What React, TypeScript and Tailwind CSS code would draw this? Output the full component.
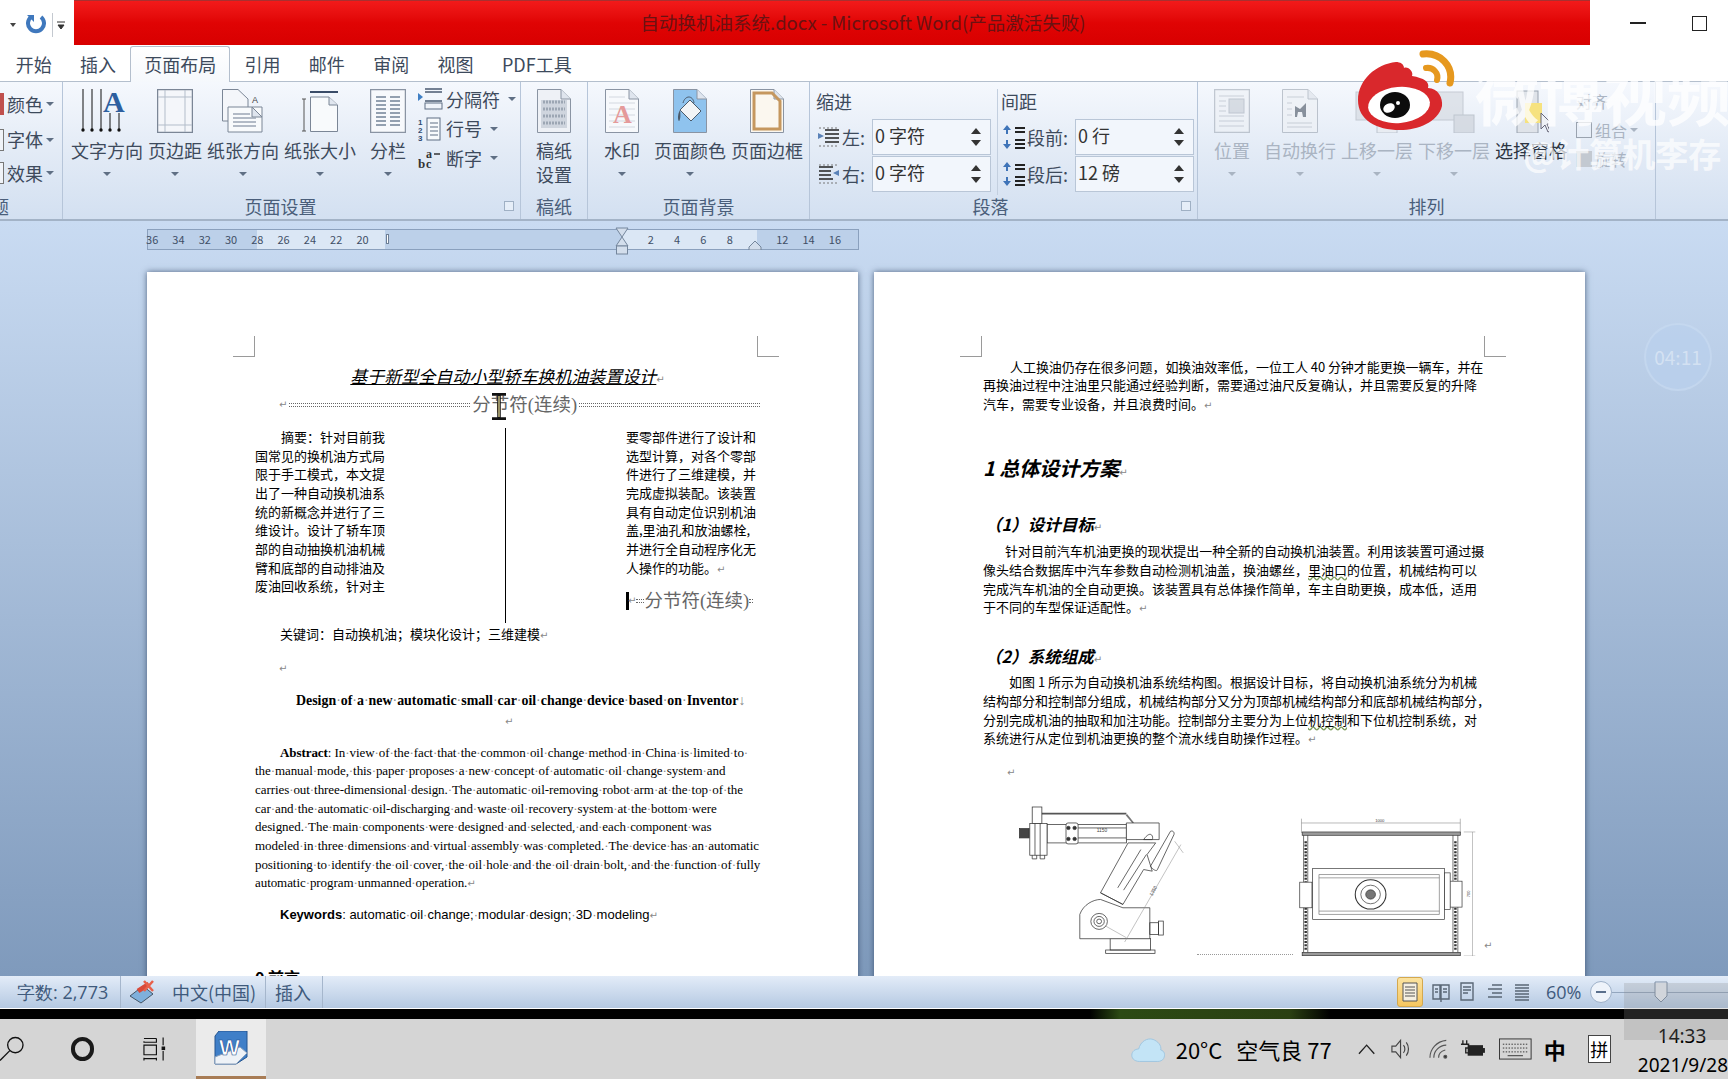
import type { ReactNode } from "react";

const CJK = "font-['Noto_Sans_CJK_SC','Liberation_Sans',sans-serif]";
const SERIF = "font-['Liberation_Serif','Noto_Sans_CJK_SC',serif]";

const Arrow = ({ light }: { light?: boolean }) => (
  <span className={`block h-0 w-0 border-x-[4px] border-t-[4px] border-x-transparent ${light ? "border-t-[#a9b4c2]" : "border-t-[#5f6f84]"}`} />
);

const Launcher = () => (
  <span className="absolute bottom-[8px] right-[6px] block h-[10px] w-[10px] border border-[#9fb0c4] bg-[#e6eef8]" />
);

const Ret = ({ className = "" }: { className?: string }) => (
  <span className={`font-['DejaVu_Sans',sans-serif] text-[10px] font-normal not-italic text-[#888] ${className}`}>↵</span>
);

const En = ({ text }: { text: string }) => (
  <>
    {text.split(" ").map((word, i, all) => (
      <span key={i}>
        {word}
        {i < all.length - 1 && <span className="font-normal text-[#888]">·</span>}
      </span>
    ))}
  </>
);

const PageShape = ({ w = 34, h = 44, fill = "#f7f9fc", stroke = "#8a94a3", children }: { w?: number; h?: number; fill?: string; stroke?: string; children?: ReactNode }) => (
  <svg width={w} height={h} viewBox={`0 0 ${w} ${h}`}>
    <path d={`M.5 .5H${w - 10}L${w - .5} 10V${h - .5}H.5Z`} fill={fill} stroke={stroke} />
    <path d={`M${w - 10} .5V10H${w - .5}`} fill="#dfe5ee" stroke={stroke} />
    {children}
  </svg>
);

const TextDirIcon = () => (
  <svg width="60" height="44" viewBox="0 0 60 44">
    {[6, 15, 24].map((x) => (
      <g key={x}>
        <path d={`M${x} 0V40`} stroke="#111" />
        <circle cx={x} cy="41" r="1.7" fill="#111" />
      </g>
    ))}
    {[33, 42].map((x) => (
      <g key={x}>
        <path d={`M${x} 24V40`} stroke="#111" />
        <circle cx={x} cy="41" r="1.7" fill="#111" />
      </g>
    ))}
    <text x="26" y="23" fontFamily="Liberation Serif" fontWeight="700" fontSize="30" fill="#2d5f9f">A</text>
  </svg>
);

const MarginIcon = () => (
  <svg width="36" height="44" viewBox="0 0 36 44">
    <rect x=".5" y=".5" width="35" height="43" fill="#f4f6fa" stroke="#7b8696" strokeWidth="1.5" />
    <path d="M8 1V43M28 1V43M1 8H35M1 36H35" stroke="#b3bdca" />
  </svg>
);

const OrientIcon = () => (
  <svg width="42" height="44" viewBox="0 0 42 44">
    <path d="M.5 .5H16L26 10V32H.5Z" fill="#f4f6fa" stroke="#7b8696" />
    <path d="M6 18H40V43H6Z" fill="#f8fafc" stroke="#7b8696" />
    <path d="M30 18L40 28H30Z" fill="#dfe5ee" stroke="#7b8696" />
    <path d="M11 25H28M11 29H34M11 33H34M11 37H34" stroke="#9aa5b4" strokeWidth="1.5" />
    <text x="30" y="14" fontSize="9" fontFamily="Liberation Sans" fill="#444">A</text>
  </svg>
);

const SizeIcon = () => (
  <svg width="36" height="44" viewBox="0 0 36 44">
    <path d="M8 3H36" stroke="#3a4c68" strokeWidth="2" />
    <path d="M2 10V42M0 10H4M0 42H4" stroke="#555" />
    <path d="M8.500 8H27L35.500 16V42.500H8.500Z" fill="#f8fafc" stroke="#7b8696" />
    <path d="M27 8V16H35.500" fill="#e0e6ef" stroke="#7b8696" />
  </svg>
);

const ColumnsIcon = () => (
  <svg width="36" height="44" viewBox="0 0 36 44">
    <rect x=".5" y=".5" width="35" height="43" fill="#f7f9fc" stroke="#8a94a3" strokeWidth="1.5" />
    {[8, 12, 16, 20, 24, 28, 32, 36].map((y) => (
      <path key={y} d={`M6 ${y}H16M20 ${y}H30`} stroke="#93a0b0" strokeWidth="2" />
    ))}
  </svg>
);

const BreakIcon = () => (
  <svg width="26" height="24" viewBox="0 0 26 24">
    <path d="M0 6L5 10L0 14Z" fill="#3f7fc4" />
    <path d="M7 2H24M7 5H24M7 14H24" stroke="#4a5a70" strokeWidth="1.5" />
    <rect x="7" y="16" width="17" height="6" fill="#f0f4fa" stroke="#5f6f84" />
  </svg>
);

const LineNoIcon = () => (
  <svg width="26" height="24" viewBox="0 0 26 24">
    <text x="0" y="8" fontSize="8" fontWeight="700" fontFamily="Liberation Sans" fill="#304a70">1</text>
    <text x="0" y="16" fontSize="8" fontWeight="700" fontFamily="Liberation Sans" fill="#304a70">2</text>
    <text x="0" y="24" fontSize="8" fontWeight="700" fontFamily="Liberation Sans" fill="#304a70">3</text>
    <rect x="9" y="1" width="13" height="22" fill="#f8fafc" stroke="#5f6f84" />
    <path d="M12 6H20M12 10H20M12 14H20M12 18H20" stroke="#5f6f84" />
  </svg>
);

const HyphenIcon = () => (
  <svg width="26" height="24" viewBox="0 0 26 24">
    <text x="0" y="22" fontSize="13" fontWeight="700" fontFamily="Liberation Serif" fill="#333">b</text>
    <text x="8" y="22" fontSize="12" fontWeight="700" fontFamily="Liberation Serif" fill="#333">c</text>
    <text x="8" y="12" fontSize="12" fontWeight="700" fontFamily="Liberation Serif" fill="#333">a</text>
    <path d="M16 8H22" stroke="#333" strokeWidth="1.500" />
  </svg>
);

const DraftIcon = () => (
  <PageShape w={34} h={44} fill="#eef1f6">
    <rect x="4" y="11" width="26" height="28" fill="#cfd5de" />
    {[13, 20, 27, 34].map((y) => (
      <path key={y} d={`M6 ${y}H28`} stroke="#9ca6b3" strokeWidth="3" strokeDasharray="2 1" />
    ))}
  </PageShape>
);

const WatermarkIcon = () => (
  <PageShape>
    <path d="M4 8H20M4 14H30M4 20H30M4 26H30M4 32H30M4 38H30" stroke="#d3d8e0" />
    <text x="8" y="34" fontSize="26" fontWeight="700" fontFamily="Liberation Serif" fill="#e59a9a">A</text>
  </PageShape>
);

const PageColorIcon = () => (
  <PageShape fill="#8fc3ee">
    <path d="M17 11L28 22L18 32L7 21Z" fill="#f2f4f6" stroke="#4b5a6a" />
    <path d="M10 14C12 6 20 6 21 14" fill="none" stroke="#4b5a6a" />
    <path d="M7 21C4 26 5 32 6 32S8 26 7 21Z" fill="#4b5a6a" />
  </PageShape>
);

const PageBorderIcon = () => (
  <PageShape fill="#fbf7ef" stroke="#8a94a3">
    <path d="M4 4H22L30 12V40H4Z" fill="none" stroke="#c5975e" strokeWidth="3" />
  </PageShape>
);

const PositionIcon = () => (
  <svg width="36" height="44" viewBox="0 0 36 44" opacity=".55">
    <rect x=".5" y=".5" width="35" height="43" fill="#eef1f5" stroke="#9aa3af" strokeWidth="1.500" />
    <path d="M5 7H30M5 12H12M5 17H12M5 22H12M5 27H30M5 32H30M5 37H30" stroke="#aab2bd" />
    <rect x="15" y="10" width="15" height="14" fill="#c3c9d1" stroke="#9aa3af" />
  </svg>
);

const WrapIcon = () => (
  <svg width="36" height="44" viewBox="0 0 36 44" opacity=".6">
    <path d="M.5 .5H26L35.500 10V43.500H.5Z" fill="#eef1f5" stroke="#9aa3af" />
    <path d="M26 .5V10H35.500" fill="#dde2e9" stroke="#9aa3af" />
    <path d="M5 8H22M5 34H30M5 38H30M5 14H10M5 20H10M5 26H10" stroke="#b0b7c1" />
    <path d="M13 17L18 20L24 14L24 28L21 28L20 23L16 23L15 28L13 28Z" fill="#44505e" />
  </svg>
);

const LayerIcon = ({ front }: { front?: boolean }) => (
  <svg width="44" height="44" viewBox="0 0 44 44" opacity=".6">
    <rect x="1" y="3" width="30" height="28" fill="#d3d8df" stroke="#a9b0ba" />
    <rect x="22" y="26" width="20" height="18" fill={front ? "#c9ced6" : "#e8ebef"} stroke="#a1a9b4" />
  </svg>
);

const SelectIcon = () => (
  <svg width="36" height="44" viewBox="0 0 36 44">
    <rect x="4" y="2" width="21" height="42" fill="#dfe3e9" stroke="#9aa3af" />
    <rect x="12" y="14" width="17" height="20" fill="#f6e27f" />
    <path d="M28 24L28 40L32 36L35 43L37 42L34 35L39 35Z" fill="#eef1f5" stroke="#667" />
  </svg>
);

const IndentIcon = ({ right }: { right?: boolean }) => (
  <svg width="24" height="20" viewBox="0 0 24 20">
    <path d={right ? "M2 3H16M2 7H14M2 11H14M2 15H16" : "M8 3H22M8 7H22M8 11H22M8 15H22"} stroke="#222" strokeWidth="1.600" />
    <path d="M2 19H22M2 1H22" stroke="#777" strokeDasharray="2 2" />
    <path d={right ? "M22 6L16 9L22 12Z" : "M1 6L7 9L1 12Z"} fill="#5a82b8" />
  </svg>
);

const SpacingIcon = () => (
  <svg width="24" height="26" viewBox="0 0 24 26">
    <path d="M13 4H23M13 8H23M13 16H23M13 20H23M13 24H23" stroke="#222" strokeWidth="1.800" />
    <path d="M5 1L1 6H9ZM5 25L1 20H9Z" fill="#3f74b8" />
    <path d="M5 6V10M5 16V20" stroke="#3f74b8" strokeWidth="2" />
  </svg>
);

const RibbonButton = ({ w, label, icon, muted, dark, noArrow }: { w: number; label: string; icon: ReactNode; muted?: boolean; dark?: boolean; noArrow?: boolean }) => (
  <div style={{ width: w }} className="flex shrink-0 flex-col items-center">
    <div className="flex h-[44px] items-center justify-center">{icon}</div>
    <span className={`mt-[5px] whitespace-nowrap text-[18px] leading-[24px] ${dark ? "text-[#2c3442]" : muted ? "text-[#aab4c2]" : "text-[#3d4a5c]"}`}>{label}</span>
    {!noArrow && (
      <span className="mt-[10px]">
        <Arrow light={muted} />
      </span>
    )}
  </div>
);

const SmallRow = ({ icon, label, h = 28 }: { icon: ReactNode; label: string; h?: number }) => (
  <div style={{ height: h }} className="flex items-center gap-[2px] whitespace-nowrap text-[18px] text-[#3d4a5c]">
    {icon}
    <span>{label}</span>
    <span className="ml-[6px]">
      <Arrow />
    </span>
  </div>
);

const Group = ({ w, label, children, launcher, labelClass = "" }: { w: number; label: string; children: ReactNode; launcher?: boolean; labelClass?: string }) => (
  <div style={{ width: w }} className="relative flex shrink-0 flex-col border-r border-[#b6c5d9]">
    <div className="flex h-[113px] pt-[7px]">{children}</div>
    <div className={`flex h-[22px] items-center justify-center text-[18px] text-[#4a5e7a] ${labelClass}`}>{label}</div>
    {launcher && <Launcher />}
  </div>
);

const Spin = ({ value }: { value: string }) => (
  <div className="flex h-[36px] w-[119px] items-center justify-between border border-[#b9c6d7] bg-[#f2f6fc] pl-[2px] pr-[9px] text-[18px] leading-none text-[#333]">
    <span className="-mt-[4px]">{value}</span>
    <div className="flex flex-col gap-[6px]">
      <span className="block h-0 w-0 border-x-[5px] border-b-[6px] border-x-transparent border-b-[#333]" />
      <span className="block h-0 w-0 border-x-[5px] border-t-[6px] border-x-transparent border-t-[#333]" />
    </div>
  </div>
);

const SpinRow = ({ icon, label, value }: { icon: ReactNode; label: string; value: string }) => (
  <div className="flex items-center">
    <div className="flex w-[26px] justify-center">{icon}</div>
    <span className="whitespace-nowrap text-[18px] text-[#3d4a5c]">{label}</span>
    <div className="ml-auto">
      <Spin value={value} />
    </div>
  </div>
);

const TitleBar = () => (
  <div className="flex h-[46px] bg-white">
    <div className="flex w-[74px] shrink-0 items-center pt-[4px]">
      <span className="ml-[10px]"><svg width="6" height="4"><path d="M0 0H6L3 4Z" fill="#444" /></svg></span>
      <svg className="ml-[10px]" width="20" height="22" viewBox="0 0 20 22">
        <path d="M5 3A8 8 0 1 0 15 3" fill="none" stroke="#3f78bd" strokeWidth="4" />
        <path d="M1 1H8V8Z" fill="#3f78bd" />
      </svg>
      <span className="ml-[6px] h-[24px] w-px bg-[#c4c9d0]" />
      <svg className="ml-[4px]" width="8" height="10"><path d="M0 2H8M1 5H7L4 9Z" stroke="#333" fill="#333" /></svg>
    </div>
    <div className={`flex h-[45px] w-[1516px] shrink-0 items-center justify-center border-t border-[#a83030] bg-gradient-to-b from-[#f21a1a] via-[#e00404] to-[#d80000] pl-[62px] text-[18.500px] text-[#6a1212] ${CJK}`}>
      自动换机油系统.docx - Microsoft Word(产品激活失败)
    </div>
    <div className="flex flex-1 items-center pl-[40px]">
      <span className="h-[2px] w-[16px] bg-[#222]" />
      <span className="ml-[46px] h-[15px] w-[15px] border border-[#222]" />
    </div>
  </div>
);

const tabs = ["开始", "插入", "页面布局", "引用", "邮件", "审阅", "视图", "PDF工具"];

const TabRow = () => (
  <div className="flex h-[36px] border-b border-[#b4bfcd] bg-white pl-[1.500px] text-[18px] text-[#3d4a5c]">
    {tabs.map((tab) =>
      tab === "页面布局" ? (
        <div key={tab} className="relative flex h-[36px] items-center rounded-t-[3px] border-x border-t border-[#b4bfcd] bg-gradient-to-b from-white to-[#f5f8fc] px-[13px]">
          {tab}
        </div>
      ) : (
        <div key={tab} className="flex h-[36px] items-center px-[14.200px]">
          {tab}
        </div>
      ),
    )}
  </div>
);

const Ribbon = () => (
  <div className="flex h-[139px] border-b-2 border-[#a3b3c7] bg-gradient-to-b from-[#f5f8fd] via-[#e3ebf6] to-[#d3e0f1]">
    <Group w={63} label="题" labelClass="pr-[62px]">
      <div className="-ml-[1px] -mt-[4px] flex flex-col text-[18px] text-[#3d4a5c]">
        <div className="flex h-[38px] items-center gap-[3px]"><span className="h-[22px] w-[5px] bg-[#c0504d]" />颜色<Arrow /></div>
        <div className="flex h-[33px] items-center gap-[3px]"><span className="h-[22px] w-[5px] border border-[#777] bg-[#f0f3f8]" />字体<Arrow /></div>
        <div className="flex h-[34px] items-center gap-[3px]"><span className="h-[22px] w-[5px] border border-[#777] bg-[#f0f3f8]" />效果<Arrow /></div>
      </div>
    </Group>
    <Group w={458} label="页面设置" launcher labelClass="pr-[22px]">
      <div className="flex pl-[5px]">
        <RibbonButton w={78} label="文字方向" icon={<TextDirIcon />} />
        <RibbonButton w={58} label="页边距" icon={<MarginIcon />} />
        <RibbonButton w={78} label="纸张方向" icon={<OrientIcon />} />
        <RibbonButton w={76} label="纸张大小" icon={<SizeIcon />} />
        <RibbonButton w={60} label="分栏" icon={<ColumnsIcon />} />
        <div className="-mt-[4px] flex flex-col">
          <SmallRow icon={<BreakIcon />} label="分隔符" />
          <SmallRow icon={<LineNoIcon />} label="行号" h={31} />
          <SmallRow icon={<HyphenIcon />} label="断字" />
        </div>
      </div>
    </Group>
    <Group w={67} label="稿纸">
      <div className="flex w-full flex-col items-center">
        <div className="flex h-[44px] items-center"><DraftIcon /></div>
        <span className="mt-[5px] text-center text-[18px] leading-[24px] text-[#3d4a5c]">稿纸<br />设置</span>
      </div>
    </Group>
    <Group w={222} label="页面背景">
      <div className="flex pl-[8px]">
        <RibbonButton w={52} label="水印" icon={<WatermarkIcon />} />
        <RibbonButton w={84} label="页面颜色" icon={<PageColorIcon />} />
        <RibbonButton w={70} label="页面边框" icon={<PageBorderIcon />} noArrow />
      </div>
    </Group>
    <Group w={388} label="段落" launcher labelClass="pr-[26px]">
      <div className="flex w-full pl-[6px] pr-[3px]">
        <div className="w-[175px]">
          <div className="h-[24px] text-[18px] leading-[24px] text-[#3d4a5c]">缩进</div>
          <div className="mt-[6px] flex flex-col gap-[1px]">
            <SpinRow icon={<IndentIcon />} label="左:" value="0 字符" />
            <SpinRow icon={<IndentIcon right />} label="右:" value="0 字符" />
          </div>
        </div>
        <div className="ml-[6px] flex-1 border-l border-[#c3cfdf] pl-[3px]">
          <div className="h-[24px] text-[18px] leading-[24px] text-[#3d4a5c]">间距</div>
          <div className="mt-[6px] flex flex-col gap-[1px]">
            <SpinRow icon={<SpacingIcon />} label="段前:" value="0 行" />
            <SpinRow icon={<SpacingIcon />} label="段后:" value="12 磅" />
          </div>
        </div>
      </div>
    </Group>
    <Group w={458} label="排列">
      <div className="flex pl-[6px]">
        <RibbonButton w={56} label="位置" muted icon={<PositionIcon />} />
        <RibbonButton w={80} label="自动换行" muted icon={<WrapIcon />} />
        <RibbonButton w={74} label="上移一层" muted icon={<LayerIcon />} />
        <RibbonButton w={80} label="下移一层" muted icon={<LayerIcon front />} />
        <RibbonButton w={74} label="选择窗格" dark noArrow icon={<SelectIcon />} />
        <div className="-mt-[2px] flex flex-col pl-[8px] text-[16px] text-[#aab4c2]">
          <div className="h-[28px] leading-[28px]">对齐</div>
          <div className="flex h-[30px] items-center gap-[3px]">
            <span className="h-[16px] w-[16px] border border-[#9aa3af]" />组合<Arrow light />
          </div>
          <div className="flex h-[28px] items-center gap-[3px]">
            <span className="h-[16px] w-[16px] bg-[#c3c9d1]" />旋转
          </div>
        </div>
      </div>
    </Group>
  </div>
);

const rulerNums = ["36", "34", "32", "30", "28", "26", "24", "22", "20"];
const rulerNumsRight = ["2", "4", "6", "8", "", "12", "14", "16"];

const Ruler = () => (
  <div className="relative ml-[147px] mt-[8px] flex h-[21px] w-[712px] border border-[#8aa0bd] bg-[#bcd0e9]">
    <div className="w-[109px] bg-[#bcd0e9]" />
    <div className="w-[128px] bg-[#dbe7f5]" />
    <div className="w-[236px] bg-[#bcd0e9]" />
    <div className="w-[136px] bg-[#dbe7f5]" />
    <div className="absolute inset-0 -ml-[9px] flex items-center text-[11px] text-[#3f4f66]">
      {rulerNums.map((n) => (
        <span key={n} className="w-[26.300px] text-center">{n}</span>
      ))}
      <span className="w-[262px]" />
      {rulerNumsRight.map((n, i) => (
        <span key={i} className="w-[26.300px] text-center">{n}</span>
      ))}
    </div>
    <span className="absolute left-[238px] top-[4px] h-[10px] w-[3px] border border-[#6d7f96] bg-white" />
    <svg className="absolute left-[466px] -top-[3px]" width="16" height="28" viewBox="0 0 16 28">
      <path d="M2 1H14L8 10ZM8 10L14 19H2Z" fill="#d3deec" stroke="#74869c" />
      <rect x="2.500" y="19" width="11" height="8" fill="#d3deec" stroke="#74869c" />
    </svg>
    <svg className="absolute left-[600px] top-[10px]" width="14" height="10" viewBox="0 0 14 10">
      <path d="M7 1L13 7V10H1V7Z" fill="#d3deec" stroke="#74869c" />
    </svg>
  </div>
);

const SectionRule = () => <span className="h-[4px] flex-1 border-y border-dotted border-[#666]" />;

const Line = ({ children, indent, className = "" }: { children: ReactNode; indent?: number; className?: string }) => (
  <div style={{ paddingLeft: indent }} className={`h-[18.670px] whitespace-nowrap ${className}`}>{children}</div>
);

const leftCol = [
  "国常见的换机油方式局",
  "限于手工模式，本文提",
  "出了一种自动换机油系",
  "统的新概念并进行了三",
  "维设计。设计了轿车顶",
  "部的自动抽换机油机械",
  "臂和底部的自动排油及",
  "废油回收系统，针对主",
];
const rightCol = [
  "要零部件进行了设计和",
  "选型计算，对各个零部",
  "件进行了三维建模，并",
  "完成虚拟装配。该装置",
  "具有自动定位识别机油",
  "盖,里油孔和放油螺栓,",
  "并进行全自动程序化无",
];
const abstractLines = [
  "the manual mode, this paper proposes a new concept of automatic oil change system and",
  "carries out three-dimensional design. The automatic oil-removing robot arm at the top of the",
  "car and the automatic oil-discharging and waste oil recovery system at the bottom were",
  "designed. The main components were designed and selected, and each component was",
  "modeled in three dimensions and virtual assembly was completed. The device has an automatic",
  "positioning to identify the oil cover, the oil hole and the oil drain bolt, and the function of fully",
];

const PageOne = () => (
  <div className={`relative h-[720px] w-[711px] shrink-0 overflow-hidden bg-white pl-[108px] pr-[98px] pt-[94px] text-[13px] leading-[18.670px] text-black ${CJK}`}>
    <span className="absolute left-[86px] top-[64px] h-[21px] w-[22px] border-b border-r border-[#9a9a9a]" />
    <span className="absolute left-[610px] top-[64px] h-[21px] w-[22px] border-b border-l border-[#9a9a9a]" />
    <div className="h-[20px] whitespace-nowrap text-center text-[17px] italic leading-[20px] text-black">
      <span className="underline">基于新型全自动小型轿车换机油装置设计</span><Ret />
    </div>
    <div className="mt-[9px] flex h-[20px] items-center pl-[24px]">
      <Ret className="mr-[2px]" />
      <SectionRule />
      <span className={`mx-[2px] text-[18.500px] leading-[20px] text-[#666] ${SERIF}`}>分节符(连续)</span>
      <SectionRule />
    </div>
    <div className="mt-[13px] flex h-[195px]">
      <div className="w-[130px] whitespace-nowrap">
        <Line indent={26}>摘要：针对目前我</Line>
        {leftCol.map((line) => <Line key={line}>{line}</Line>)}
      </div>
      <div className="flex w-[241px] justify-center"><span className="h-full w-px bg-black" /></div>
      <div className="w-[132px] whitespace-nowrap">
        {rightCol.map((line) => <Line key={line}>{line}</Line>)}
        <Line>人操作的功能。<Ret /></Line>
        <div className="mt-[14px] flex h-[20px] items-center">
          <span className="h-[18px] w-[3px] bg-black" />
          <Ret className="-ml-[1px]" />
          <span className="h-[4px] w-[8px] border-y border-dotted border-[#666]" />
          <span className={`text-[18.500px] leading-[20px] text-[#666] ${SERIF}`}>分节符(连续)</span>
          <span className="h-[4px] w-[4px] border-y border-dotted border-[#666]" />
        </div>
      </div>
    </div>
    <Line indent={25} className="mt-[2px]">关键词：自动换机油；模块化设计；三维建模<Ret /></Line>
    <Line indent={24} className="mt-[14px]"><Ret /></Line>
    <Line indent={41} className={`mt-[16px] text-[13.900px] font-bold ${SERIF}`}>
      <En text="Design of a new automatic small car oil change device based on Inventor" /><span className="text-[#888]">↓</span>
    </Line>
    <Line indent={250}><Ret /></Line>
    <div className={`mt-[14px] text-[13px] tracking-[-0.070px] ${SERIF}`}>
      <Line indent={25}><b>Abstract</b>: <En text="In view of the fact that the common oil change method in China is limited to " /></Line>
      {abstractLines.map((line) => <Line key={line}><En text={line} /></Line>)}
      <Line><En text="automatic program unmanned operation." /><Ret /></Line>
    </div>
    <Line indent={25} className="mt-[13.500px] font-['Liberation_Sans',sans-serif] text-[13px]">
      <b>Keywords</b>: <En text="automatic oil change; modular design; 3D modeling" /><Ret />
    </Line>
    <div className="mt-[43px] whitespace-nowrap text-[16px] font-bold">0 前言</div>
  </div>
);

const RobotArm = () => (
  <svg width="169" height="153" viewBox="100 130 490 460" preserveAspectRatio="none" fill="none" stroke="#333" strokeWidth="2.200">
    <rect x="360" y="572" width="143" height="10" />
    <rect x="373" y="537" width="117" height="35" />
    <path d="M285 538V465C295 435 325 420 345 420L410 445H488V538Z" fill="#fff" />
    <circle cx="341" cy="486" r="24" /><circle cx="341" cy="486" r="15" /><circle cx="341" cy="486" r="7" />
    <rect x="488" y="490" width="25" height="35" /><rect x="513" y="485" width="14" height="42" />
    <path d="M345 400L425 250L505 250L480 285L495 335L470 330L410 435Z" fill="#fff" />
    <path d="M395 385L462 270M412 392L478 285M345 400L410 435" />
    <path d="M490 320L548 215M510 330L558 225M490 320C500 335 510 335 510 330M548 215C555 212 560 218 558 225" />
    <rect x="190" y="195" width="230" height="55" fill="#fff" />
    <path d="M280 205H420M280 235H420" />
    <rect x="245" y="190" width="35" height="63" rx="6" fill="#fff" />
    <g fill="#333"><circle cx="252" cy="205" r="5" /><circle cx="270" cy="205" r="5" /><circle cx="252" cy="238" r="5" /><circle cx="270" cy="238" r="5" /></g>
    <path d="M175 162H420" strokeWidth="5" stroke="#555" />
    <path d="M420 165L440 190" strokeWidth="5" stroke="#777" />
    <path d="M420 190H515V240H470C490 210 500 230 495 240H420Z" fill="#fff" />
    <rect x="147" y="142" width="28" height="50" />
    <rect x="140" y="192" width="50" height="95" fill="#fff" />
    <path d="M155 192V287M170 192V287M147 287V298H160V287M170 287V298H183V287" />
    <rect x="110" y="207" width="28" height="28" fill="#444" />
    <path d="M415 548L578 255M560 245L585 280M360 500L420 535" stroke="#888" strokeWidth="1.500" />
    <text x="334" y="218" fontSize="14" stroke="none" fill="#444" fontFamily="Liberation Sans">1150</text>
    <text x="0" y="0" transform="translate(495 410) rotate(-62)" fontSize="14" stroke="none" fill="#444" fontFamily="Liberation Sans">1350</text>
  </svg>
);

const FrameDrawing = () => (
  <svg width="178" height="138" viewBox="920 170 510 415" preserveAspectRatio="none" fill="none" stroke="#333" strokeWidth="2">
    <path d="M930 185H1385M930 172V215M1385 172V215" stroke="#777" strokeWidth="1.500" />
    <text x="1141" y="182" fontSize="12" stroke="none" fill="#444" fontFamily="Liberation Sans">1000</text>
    <rect x="932" y="212" width="453" height="10" fill="#9a9a9a" />
    <rect x="932" y="574" width="453" height="10" fill="#9a9a9a" />
    <path d="M936 222V574M948 222V574M1364 222V574M1378 222V574" />
    <path d="M942 240V570M1371 240V570" stroke="#333" strokeWidth="7" strokeDasharray="6 4" />
    <rect x="962" y="322" width="378" height="153" fill="#fff" />
    <path d="M980 340H1325M980 350H1325M980 450H1325M980 460H1325M980 340V460M1325 340V460" stroke="#777" />
    <circle cx="1128" cy="400" r="44" fill="#fff" strokeWidth="3" />
    <circle cx="1128" cy="400" r="28" /><circle cx="1128" cy="400" r="14" fill="#777" />
    <rect x="925" y="363" width="35" height="77" fill="#fff" />
    <rect x="1355" y="360" width="35" height="78" fill="#fff" />
    <rect x="1340" y="335" width="16" height="110" fill="#fff" />
    <path d="M1420 212V585M1395 212H1428M1395 585H1428" stroke="#888" strokeWidth="1.500" />
    <text x="0" y="0" transform="translate(1414 408) rotate(-90)" fontSize="12" stroke="none" fill="#444" fontFamily="Liberation Sans">700</text>
  </svg>
);

const PageTwo = () => (
  <div className={`relative h-[720px] w-[711px] shrink-0 overflow-hidden bg-white pl-[109px] pt-[85.700px] text-[13px] leading-[18.670px] text-black ${CJK}`}>
    <span className="absolute left-[86px] top-[64px] h-[21px] w-[22px] border-b border-r border-[#9a9a9a]" />
    <span className="absolute left-[610px] top-[64px] h-[21px] w-[22px] border-b border-l border-[#9a9a9a]" />
    <Line indent={27}><span className="tracking-[-0.050px]">人工换油仍存在很多问题，如换油效率低，一位工人 40 分钟才能更换一辆车，并在</span></Line>
    <Line>再换油过程中注油里只能通过经验判断，需要通过油尺反复确认，并且需要反复的升降</Line>
    <Line>汽车，需要专业设备，并且浪费时间。<Ret /></Line>
    <div className="mt-[41px] h-[26px] whitespace-nowrap text-[20px] font-bold italic leading-[26px]">1 总体设计方案<Ret /></div>
    <div className="ml-[2px] mt-[32px] h-[22px] whitespace-nowrap text-[16.500px] font-bold italic leading-[22px]">（1）设计目标<Ret /></div>
    <div className="mt-[7.700px]">
      <Line indent={22}><span className="tracking-[-0.050px]">针对目前汽车机油更换的现状提出一种全新的自动换机油装置。利用该装置可通过摄</span></Line>
      <Line>像头结合数据库中汽车参数自动检测机油盖，换油螺丝，<span className="underline decoration-[#7a9a5a] decoration-wavy">里油口</span>的位置，机械结构可以</Line>
      <Line>完成汽车机油的全自动更换。该装置具有总体操作简单，车主自助更换，成本低，适用</Line>
      <Line>于不同的车型保证适配性。<Ret /></Line>
    </div>
    <div className="ml-[2px] mt-[27.600px] h-[22px] whitespace-nowrap text-[16.500px] font-bold italic leading-[22px]">（2）系统组成<Ret /></div>
    <div className="mt-[6.700px]">
      <Line indent={26}>如图 1 所示为自动换机油系统结构图。根据设计目标，将自动换机油系统分为机械</Line>
      <Line>结构部分和控制部分组成，机械结构部分又分为顶部机械结构部分和底部机械结构部分，</Line>
      <Line>分别完成机油的抽取和加注功能。控制部分主要分为上位<span className="underline decoration-[#7a9a5a] decoration-wavy">机控制</span>和下位机控制系统，对</Line>
      <Line>系统进行从定位到机油更换的整个流水线自助操作过程。<Ret /></Line>
    </div>
    <Line indent={24} className="mt-[14.600px]"><Ret /></Line>
    <div className="ml-[33px] mt-[22px] flex items-end">
      <RobotArm />
      <span className="mb-[1px] ml-[12px] w-[96px] border-b border-dotted border-[#999]" />
      <span className="ml-[5px]"><FrameDrawing /></span>
      <Ret className="ml-[8px]" />
    </div>
  </div>
);

const DocArea = () => (
  <div className="relative h-[755px] overflow-hidden bg-gradient-to-b from-[#c9dbf2] to-[#7f9abc]">
    <Ruler />
    <div className="ml-[147px] mt-[22px] flex gap-[16px]">
      <div className="shadow-[0_0_6px_rgba(50,70,100,0.8)]"><PageOne /></div>
      <div className="shadow-[0_0_6px_rgba(50,70,100,0.8)]"><PageTwo /></div>
    </div>
    <svg className="absolute left-[490px] top-[172px]" width="18" height="27" viewBox="0 0 18 27">
      <path d="M2 1H16M2 26H16M9 1V26" stroke="#111" strokeWidth="3.500" fill="none" />
      <path d="M9 3V24" stroke="#f6e9a0" strokeWidth="1.200" />
    </svg>
    <span className="absolute left-[1644px] top-[102px] flex h-[68px] w-[68px] items-center justify-center rounded-full border-2 border-white/15 bg-[#b9d0ec]/70 text-[19px] text-white/40">04:11</span>
  </div>
);

const StatusSep = () => <span className="h-[32px] w-px bg-[#a5b6cc]" />;

const ViewIcon = ({ d }: { d: string }) => (
  <svg className="ml-[9px]" width="18" height="20" viewBox="0 0 18 20">
    <path d={d} fill="none" stroke="#5a6776" strokeWidth="1.400" />
  </svg>
);

const StatusBar = () => (
  <div className={`relative flex h-[33px] items-center border-b border-white bg-gradient-to-b from-[#e3ecf8] to-[#b5c9e2] text-[18px] text-[#3f5a7c] ${CJK}`}>
    <span className="ml-[8px]"><StatusSep /></span>
    <span className="w-[112px] pl-[9px] font-['Open_Sans',sans-serif] text-[18px]">字数: 2,773</span>
    <StatusSep />
    <svg className="ml-[8px]" width="26" height="24" viewBox="0 0 26 24">
      <path d="M1 16L14 6L24 14L12 23Z" fill="#7fb0dc" stroke="#456" />
      <path d="M9 11L20 4" stroke="#d84a3a" strokeWidth="5" />
      <path d="M15 1L24 11M24 1L15 11" stroke="#e8604a" strokeWidth="2.500" />
    </svg>
    <span className="ml-[17px] w-[93px]">中文(中国)</span>
    <StatusSep />
    <span className="w-[56px] pl-[9px]">插入</span>
    <StatusSep />
    <div className="ml-[1074px] flex h-[30px] w-[26px] items-center justify-center rounded-[3px] border border-[#d4a84e] bg-gradient-to-b from-[#fbe3a0] to-[#f6c65e]">
      <svg width="16" height="20" viewBox="0 0 16 20"><path d="M1 1H15V19H1ZM3 5H13M3 8H13M3 11H13M3 14H13" fill="#f5efe0" stroke="#555" /></svg>
    </div>
    <ViewIcon d="M1 3H8V17H1ZM9 3H17V17H9ZM3 7H6M3 10H6M11 7H15M11 10H15M9 17V20" />
    <ViewIcon d="M2 1H14V18H2ZM4 5H12M4 8H12M4 11H9" />
    <ViewIcon d="M6 3H16M2 7H16M6 11H16M2 15H16" />
    <ViewIcon d="M2 3H16M2 6H16M2 9H16M2 12H16M2 15H16M2 18H16" />
    <span className="ml-[15px] font-['Open_Sans',sans-serif]">60%</span>
    <span className="ml-[9px] flex h-[22px] w-[22px] items-center justify-center rounded-full border border-[#9eb1c9] bg-[#eef3fa]">
      <span className="h-[2px] w-[10px] bg-[#5a6f8c]" />
    </span>
    <div className="relative flex-1">
      <div className="h-px w-full bg-[#93a6be]" />
      <svg className="absolute -top-[11px] left-[42px]" width="14" height="22" viewBox="0 0 14 22">
        <path d="M1 1H13V15L7 21L1 15Z" fill="#e8eef6" stroke="#7c8ea5" />
      </svg>
    </div>
  </div>
);

const Taskbar = () => (
  <div className={`flex h-[60px] items-center bg-[#d5d5d5] text-black ${CJK}`}>
    <svg className="ml-0 mt-[-2px]" width="28" height="28" viewBox="0 0 28 28" fill="none" stroke="#111" strokeWidth="1.400">
      <circle cx="16" cy="11" r="8" />
      <path d="M10 17L0 27" />
    </svg>
    <span className="ml-[44px] h-[24px] w-[24px] rounded-full border-[4px] border-[#1a1a1a]" />
    <svg className="ml-[49px]" width="24" height="24" viewBox="0 0 24 24" fill="none" stroke="#111" strokeWidth="1.200">
      <path d="M1 1H14M1 4V5H14V1M1 8H14V18H1ZM1 22H14M1 21V24M14 21V24M21 0V8M21 14V24" />
      <rect x="20" y="10" width="2.500" height="2.500" fill="#111" />
    </svg>
    <div className="ml-[30px] flex h-[60px] w-[73px] items-center justify-center border-b-[3px] border-[#a87c55] bg-[#ebebeb]">
      <svg width="34" height="34" viewBox="0 0 34 34">
        <path d="M5 0H33V26L22 33H1V5Z" fill="#3f7fc8" stroke="#24548f" />
        <path d="M1 26L26 16L33 22L22 33H1Z" fill="#eef2f7" stroke="#8aa1bd" />
        <text x="5" y="24" fontSize="22" fontWeight="700" fontFamily="Liberation Sans" fill="#fff" stroke="#174a8f" strokeWidth=".6">W</text>
      </svg>
    </div>
    <svg className="ml-[865px]" width="36" height="28" viewBox="0 0 36 28">
      <path d="M9 27C3 27 0 23 1 19C2 15 6 14 8 14C10 6 17 2 23 4C28 6 32 10 31 15C35 16 36 20 34 24C33 26 30 27 28 27Z" fill="#c3e4f6" stroke="#9fc6e0" />
    </svg>
    <span className="ml-[10px] whitespace-nowrap text-[22px]">20°C</span>
    <span className="ml-[14px] whitespace-nowrap text-[22px]">空气良 77</span>
    <svg className="ml-[26px]" width="18" height="12" viewBox="0 0 18 12" fill="none" stroke="#222" strokeWidth="1.400"><path d="M1 11L9 2L17 11" /></svg>
    <svg className="ml-[15px]" width="22" height="22" viewBox="0 0 22 22" fill="none" stroke="#444" strokeWidth="1.200">
      <path d="M2 8H6L11 2V20L6 14H2ZM14 7C16 9 16 13 14 15M17 4C20 8 20 14 17 18" />
    </svg>
    <svg className="ml-[18px]" width="20" height="20" viewBox="0 0 20 20" fill="none" stroke="#555" strokeWidth="1.200">
      <path d="M1 19C1 10 8 2 18 1M5 19C5 12 11 6 18 6M10 19C10 15 13 12 17 11" />
      <circle cx="17" cy="18" r="1.500" fill="#333" />
    </svg>
    <svg className="ml-[12px]" width="26" height="20" viewBox="0 0 26 20">
      <path d="M3 1V5M7 1V5M1 5H9V9H6V14H10" fill="none" stroke="#222" strokeWidth="1.400" />
      <rect x="8" y="6" width="16" height="11" fill="#222" />
      <rect x="24" y="9" width="2" height="5" fill="#222" />
    </svg>
    <svg className="ml-[14px]" width="34" height="22" viewBox="0 0 34 22" fill="none" stroke="#333">
      <rect x=".5" y=".5" width="33" height="21" />
      <path d="M4 6H30M4 10H30M4 14H30" strokeDasharray="1.500 1.500" />
      <path d="M9 18H25" />
    </svg>
    <span className="ml-[12px] text-[22px] font-bold">中</span>
    <span className="ml-[22px] flex h-[28px] w-[24px] items-center justify-center border border-[#444] bg-white text-[18px]">拼</span>
    <div className="ml-[21px] mt-[4px] flex w-[100px] flex-col items-start whitespace-nowrap font-['Noto_Sans',sans-serif] text-[19px] leading-[29px]">
      <span className="ml-[26px]">14:33</span>
      <span className="ml-[6px]">2021/9/28</span>
    </div>
  </div>
);

const Watermark = () => (
  <>
    <svg className="absolute left-[1358px] top-[50px]" width="98" height="80" viewBox="0 0 98 80">
      <path d="M0 50C0 30 18 14 38 12C42 12 46 14 46 18C50 16 56 22 54 26C66 28 72 32 70 38C80 38 85 48 84 56C80 72 60 80 42 80C18 80 0 70 0 50Z" fill="#d9282c" />
      <ellipse cx="41" cy="55" rx="31" ry="18" fill="#fff" transform="rotate(-5 41 55)" />
      <ellipse cx="37" cy="55" rx="15" ry="13" fill="#0c0c0c" />
      <ellipse cx="31" cy="58" rx="6" ry="4.500" fill="#fff" transform="rotate(-25 31 58)" />
      <circle cx="40" cy="53" r="2" fill="#fff" />
      <path d="M65 4C82 2 96 16 92 33" fill="none" stroke="#e6981e" strokeWidth="7" strokeLinecap="round" />
      <path d="M68 18C75 17 81 23 79 30" fill="none" stroke="#e6981e" strokeWidth="6" strokeLinecap="round" />
    </svg>
    <span className="absolute left-[1475px] top-[56px] whitespace-nowrap text-[64px] font-bold leading-[72px] text-white/75">微博视频</span>
    <span className="absolute left-[1523px] top-[133px] whitespace-nowrap text-[33px] font-bold leading-[40px] text-white/70">@计算机李存</span>
    <span className="absolute left-[1624px] top-[983px] h-[57px] w-[104px] bg-[#8a8a8a]/25" />
  </>
);

export default function App() {
  return (
    <div className={`relative h-[1080px] w-[1728px] overflow-hidden ${CJK}`}>
      <TitleBar />
      <TabRow />
      <Ribbon />
      <DocArea />
      <StatusBar />
      <div className="h-[10px] bg-[linear-gradient(90deg,#000_1090px,#2c4a14_1120px,#2a3f12_1290px,#000_1330px)]" />
      <Taskbar />
      <Watermark />
    </div>
  );
}
